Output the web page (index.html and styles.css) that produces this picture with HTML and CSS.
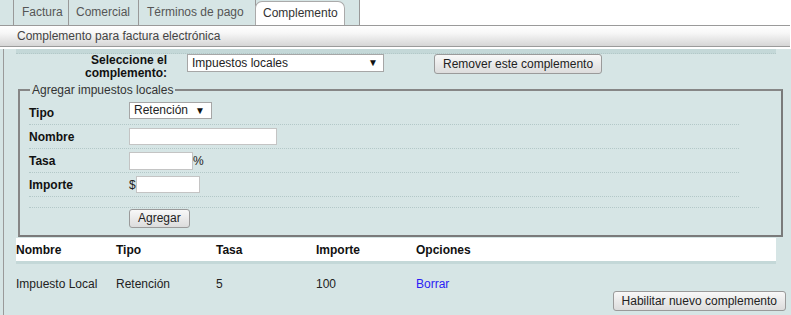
FILE: index.html
```html
<!DOCTYPE html>
<html lang="es">
<head>
<meta charset="utf-8">
<title>Complemento</title>
<link rel="stylesheet" href="styles.css">
</head>
<body>
<div class="tabbar">
  <ul class="tabs">
    <li class="tab t-factura">Factura</li>
    <li class="tab t-comercial">Comercial</li>
    <li class="tab t-terminos">Términos de pago</li>
    <li class="tab active">Complemento</li>
  </ul>
</div>
<div class="subbar">Complemento para factura electrónica</div>
<div class="content">
  <div class="panel">
    <div class="band"></div>
    <div class="selrow">
      <label class="sellabel">Seleccione el<br>complemento:</label>
      <span class="select wide">Impuestos locales</span>
      <button class="btn">Remover este complemento</button>
    </div>
    <fieldset class="box">
      <legend>Agregar impuestos locales</legend>
      <div class="frow"><span class="flabel">Tipo</span><span class="select small">Retención</span></div>
      <div class="frow"><span class="flabel">Nombre</span><span class="input nombre"></span></div>
      <div class="frow"><span class="flabel">Tasa</span><span class="input tasa"></span><span class="unit">%</span></div>
      <div class="frow"><span class="flabel">Importe</span><span class="unit pre">$</span><span class="input importe"></span></div>
      <div class="spacer"></div>
      <button class="btn add">Agregar</button>
    </fieldset>
    <table class="grid">
      <thead>
        <tr><th>Nombre</th><th>Tipo</th><th>Tasa</th><th>Importe</th><th>Opciones</th></tr>
      </thead>
      <tbody>
        <tr><td>Impuesto Local</td><td>Retención</td><td>5</td><td>100</td><td><a class="link" href="#">Borrar</a></td></tr>
      </tbody>
    </table>
    <div class="actions"><button class="btn">Habilitar nuevo complemento</button></div>
  </div>
</div>
</body>
</html>
```

FILE: styles.css
```css
html, body {
  margin: 0;
  padding: 0;
  background: #fff;
  font-family: "Liberation Sans", Arial, sans-serif;
  font-size: 12px;
  color: #222;
  overflow: hidden;
}

.tabbar {
  display: flex;
  height: 25px;
}

.tabs {
  display: flex;
  margin: 0;
  padding: 0 14px 0 13px;
  list-style: none;
  background: #d6e5e5;
  border-right: 1px solid #999;
}

.tab {
  box-sizing: border-box;
  padding: 0 0 0 8px;
  line-height: 25px;
  border-right: 1px solid #999;
  color: #555;
  white-space: nowrap;
}

.t-factura {
  border-left: 1px solid #999;
  width: 56px;
}

.t-comercial {
  width: 70px;
  padding-left: 7px;
}

.t-terminos {
  width: 117px;
  padding-left: 8px;
}

.tab.active {
  width: 90px;
  margin-left: -1px;
  margin-top: 1px;
  padding-left: 7px;
  line-height: 23px;
  background: #fff;
  border: 1px solid #aaa;
  border-bottom: 0;
  border-radius: 7px 7px 0 0;
  color: #333;
}

.subbar {
  height: 20px;
  line-height: 20px;
  padding-left: 17px;
  margin-right: 1px;
  border-top: 1px solid #9a9a9a;
  border-bottom: 1px solid #9a9a9a;
  background: linear-gradient(#ffffff 0%, #f7f7f7 35%, #d6d6d6 100%);
  color: #444;
}

.content {
  background: #d6e5e5;
  padding-left: 3px;
}

.panel {
  border-left: 1px solid #9a9a9a;
  padding: 0 5px 0 12px;
  min-height: 268px;
}

.band {
  width: 760px;
  height: 4px;
  margin-top: 2px;
  background: #c4d8d8;
  border-bottom: 1px dotted #b3c8c8;
}

.selrow {
  display: flex;
  align-items: flex-start;
  height: 25px;
}

.sellabel {
  width: 151px;
  margin-right: 20px;
  padding-top: 0;
  text-align: right;
  font-weight: bold;
  line-height: 13px;
  color: #111;
}

.select {
  position: relative;
  display: block;
  box-sizing: border-box;
  background: #fff;
  border: 1px solid #a6a6a6;
  padding-left: 4px;
  color: #222;
}

.select::after {
  content: "▼";
  position: absolute;
  top: 0;
  font-size: 10px;
  color: #111;
}

.select.wide {
  width: 197px;
  height: 18px;
  line-height: 16px;
  margin-right: 50px;
}

.select.wide::after {
  right: 5px;
  line-height: 16px;
}

.select.small {
  width: 83px;
  height: 17px;
  line-height: 15px;
  align-self: flex-start;
  margin-top: 1px;
}

.select.small::after {
  right: 6px;
  line-height: 15px;
}

.btn {
  height: 20px;
  padding: 0 8px;
  border: 1px solid #9a9a9a;
  border-radius: 3px;
  background: linear-gradient(#f8f8f8, #dcdcdc);
  font-family: "Liberation Sans", Arial, sans-serif;
  font-size: 12px;
  color: #222;
  line-height: 18px;
}

.box {
  margin: 4px 3px 1px 2px;
  padding: 4px 12px 7px 9px;
  border: 2px solid #8a8a8a;
  border-top-color: #868686;
  border-left-color: #868686;
  border-right-color: #7a7a7a;
  border-bottom-color: #7a7a7a;
}

.box legend {
  padding: 0 2px;
  margin-left: 1px;
  line-height: 14px;
  color: #333;
}

.frow {
  display: flex;
  align-items: center;
  width: 710px;
  height: 23px;
  border-bottom: 1px dotted #b3c8c8;
}

.flabel {
  width: 100px;
  font-weight: bold;
  color: #111;
}

.input {
  display: block;
  box-sizing: border-box;
  height: 17px;
  background: #fff;
  border: 1px solid #c4c4c4;
}

.input.nombre { width: 148px; }
.input.tasa { width: 64px; height: 18px; }
.input.importe { width: 64px; }

.unit { color: #222; }
.unit.pre { width: 7px; }

.spacer {
  width: 730px;
  height: 10px;
  border-bottom: 1px dotted #b3c8c8;
}

.btn.add {
  display: block;
  height: 19px;
  line-height: 17px;
  margin: 1px 0 0 100px;
}

.grid {
  width: 760px;
  border-collapse: collapse;
}

.grid th {
  width: 100px;
  height: 23px;
  padding: 0;
  text-align: left;
  background: #fff;
  font-weight: bold;
  color: #111;
  border-bottom: 3px solid #c4d8d8;
}

.grid th:last-child { width: auto; }

.grid td {
  padding: 13px 0 0;
  line-height: 14px;
  color: #222;
}

.link {
  color: #2a1cf5;
  text-decoration: none;
}

.actions {
  display: flex;
  justify-content: flex-end;
}
```
